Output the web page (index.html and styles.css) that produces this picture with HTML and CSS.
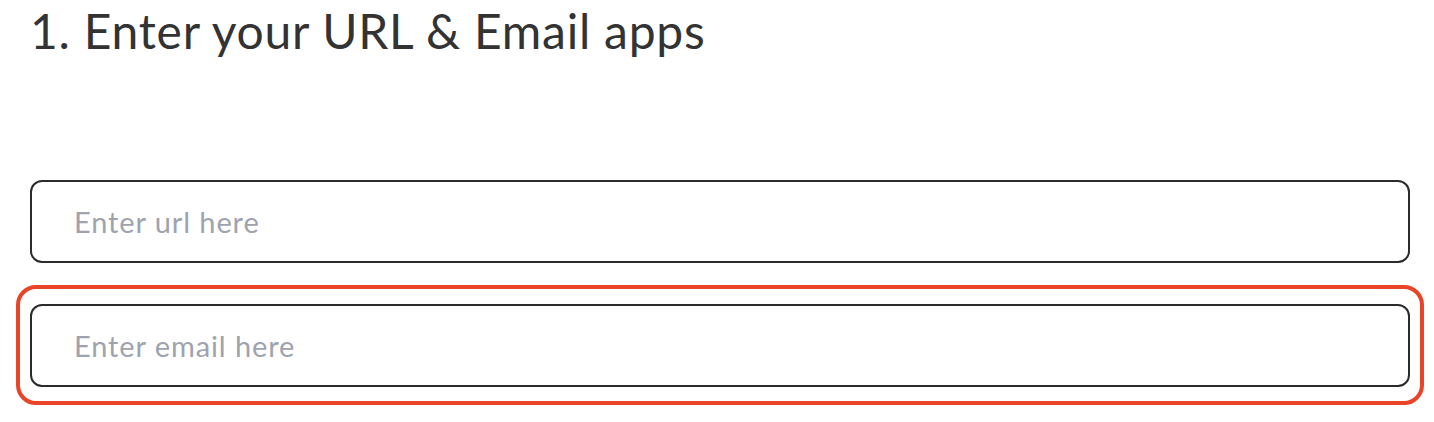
FILE: index.html
```html
<!DOCTYPE html>
<html lang="en">
<head>
<meta charset="utf-8">
<title>Enter your URL &amp; Email apps</title>
<link rel="stylesheet" href="styles.css">
</head>
<body>
<main class="page">
  <h1 class="title">1. Enter your URL &amp; Email apps</h1>
  <form class="fields">
    <input class="field" type="text" placeholder="Enter url here">
    <div class="highlight">
      <input class="field" type="email" placeholder="Enter email here">
    </div>
  </form>
</main>
</body>
</html>
```
FILE: styles.css
```css
html, body {
  margin: 0;
  padding: 0;
  background: #ffffff;
}

.page {
  padding: 0 24px 0 30px;
  font-family: "Lato", "Open Sans", sans-serif;
}

.title {
  margin: 0;
  padding-top: 2px;
  font-size: 48px;
  line-height: 58px;
  font-weight: 400;
  color: #333333;
  letter-spacing: 0.75px;
  height: 180px;
  box-sizing: border-box;
}

.fields {
  display: flex;
  flex-direction: column;
  gap: 22px;
  margin: 0;
}

.field {
  display: block;
  box-sizing: border-box;
  width: 1380px;
  height: 83px;
  margin: 0;
  padding: 0 0 0 42px;
  border: 2px solid #2b2b2b;
  border-radius: 12px;
  background: #ffffff;
  font-family: "Lato", "Open Sans", sans-serif;
  font-size: 29px;
  letter-spacing: 0.9px;
  color: #333333;
  outline: none;
}

.field::placeholder {
  color: #9ea3ae;
  opacity: 1;
}

.highlight {
  box-sizing: border-box;
  width: 1408px;
  margin-left: -14px;
  padding: 15px 10px 14px;
  border: 4px solid #e94428;
  border-radius: 20px;
}
```
